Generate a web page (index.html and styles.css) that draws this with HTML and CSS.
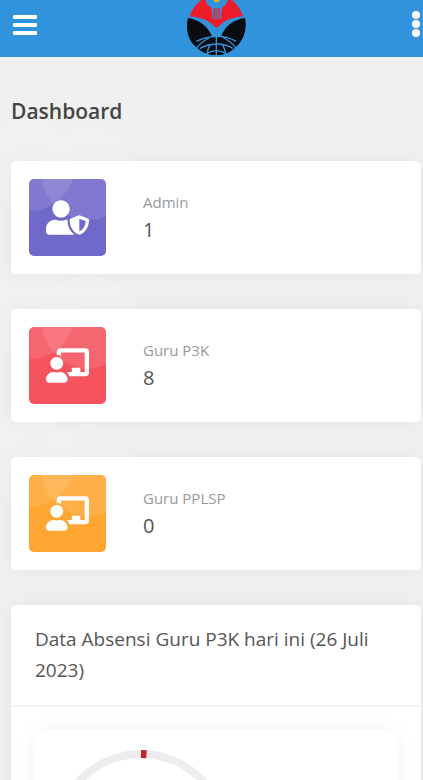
FILE: index.html
```html
<!DOCTYPE html>
<html lang="id">
<head>
<meta charset="utf-8">
<meta name="viewport" content="width=device-width, initial-scale=1">
<title>Dashboard</title>
<link rel="stylesheet" href="styles.css">
</head>
<body>
<header class="topbar">
  <button class="icon-button" type="button" aria-label="Menu">
    <svg width="24" height="22" viewBox="0 0 24 22" fill="currentColor"><rect x="1" y="1" width="24" height="4" rx="1"/><rect x="1" y="9" width="24" height="4" rx="1"/><rect x="1" y="17" width="24" height="4" rx="1"/></svg>
  </button>
  <a class="brand" href="#" aria-label="Beranda">
    <svg width="62" height="60" viewBox="3 0 186 180">
      <path fill="#ed1c2a" d="M14 49Q24 17 54-4H136Q164 17 174 49Q124 52 95 85Q66 52 14 49Z"/>
      <path fill="#3293dd" d="M62-4Q62 14 76 20Q82 24 82 56H86V24H91V58H94V24H97V58H100V24H104V56H108Q108 24 114 20Q128 14 128-4Z"/>
      <circle cx="95" cy="-2" r="9" fill="#f7b51c"/>
      <path fill="#090c10" d="M9 54Q60 62 82 110L95 108L108 110Q126 62 180 54C187 84 177 120 154 140C136 158 118 165 94 165S50 158 32 140C8 120 1 84 9 54Z"/>
      <path fill="none" stroke="#3293dd" stroke-width="4" d="M94 106V168M34 124Q60 110 94 109T153 124M44 146Q66 133 94 132T144 146M66 160Q78 152 94 152T122 160M82 108Q44 128 34 146M107 108Q144 128 154 146M76 134Q68 146 66 162M112 134Q120 146 122 162"/>
    </svg>
  </a>
  <button class="icon-button more" type="button" aria-label="Lainnya">
    <svg width="10" height="28" viewBox="0 0 10 28" fill="currentColor"><circle cx="5" cy="5" r="4"/><circle cx="5" cy="14" r="4"/><circle cx="5" cy="23" r="4"/></svg>
  </button>
</header>
<main class="content">
  <h1 class="title">Dashboard</h1>
  <div class="cards">
    <section class="card stat">
      <div class="tile purple">
        <svg class="glyph" viewBox="0 0 640 512"><path d="M622.3 271.1l-115.2-45c-4.1-1.6-12.6-3.7-22.2 0l-115.2 45c-10.7 4.2-17.700 14-17.700 24.900 0 111.600 68.700 188.800 132.900 213.900 9.600 3.700 18 1.600 22.200 0C558.400 489.900 640 420.500 640 296c0-10.900-7-20.700-17.700-24.900zM496 462.400V273.300l95.500 37.300c-5.600 87.100-60.900 135.400-95.500 151.800zM224 256c70.700 0 128-57.300 128-128S294.700 0 224 0 96 57.300 96 128s57.300 128 128 128zm96 40c0-2.500.8-4.800 1.100-7.200-2.500-.1-4.900-.8-7.500-.8h-16.700c-22.200 10.200-46.900 16-72.900 16s-50.600-5.800-72.900-16h-16.700C60.200 288 0 348.200 0 422.400V464c0 26.500 21.500 48 48 48h352c6.800 0 13.300-1.500 19.200-4-54-42.900-99.200-116.700-99.200-212z"/></svg>
      </div>
      <div class="info"><span class="label">Admin</span><span class="value">1</span></div>
    </section>
    <section class="card stat">
      <div class="tile red">
        <svg class="glyph" viewBox="0 0 640 512"><path d="M208 352c-2.390 0-4.780.35-7.060 1.090C187.980 357.300 174.350 360 160 360c-14.350 0-27.980-2.700-40.950-6.910-2.280-.74-4.660-1.090-7.050-1.090C49.940 352-.33 402.480 0 464.620.14 490.880 21.730 512 48 512h224c26.270 0 47.860-21.120 48-47.380.33-62.140-49.940-112.620-112-112.620zm-48-32c53.020 0 96-42.980 96-96s-42.980-96-96-96-96 42.980-96 96 42.980 96 96 96zM592 0H208c-26.470 0-48 22.250-48 49.590V96c23.420 0 45.100 6.780 64 17.800V64h352v288h-64v-64H384v64h-76.240c19.100 16.690 33.120 38.730 39.690 64H592c26.470 0 48-22.250 48-49.590V49.590C640 22.250 618.470 0 592 0z"/></svg>
      </div>
      <div class="info"><span class="label">Guru P3K</span><span class="value">8</span></div>
    </section>
    <section class="card stat">
      <div class="tile orange">
        <svg class="glyph" viewBox="0 0 640 512"><path d="M208 352c-2.390 0-4.780.35-7.060 1.090C187.980 357.300 174.350 360 160 360c-14.350 0-27.980-2.700-40.950-6.910-2.280-.74-4.660-1.090-7.050-1.090C49.940 352-.33 402.480 0 464.620.14 490.880 21.730 512 48 512h224c26.270 0 47.860-21.120 48-47.380.33-62.140-49.940-112.620-112-112.620zm-48-32c53.020 0 96-42.980 96-96s-42.980-96-96-96-96 42.980-96 96 42.980 96 96 96zM592 0H208c-26.470 0-48 22.250-48 49.590V96c23.420 0 45.100 6.780 64 17.800V64h352v288h-64v-64H384v64h-76.240c19.100 16.690 33.120 38.730 39.690 64H592c26.470 0 48-22.250 48-49.590V49.590C640 22.250 618.470 0 592 0z"/></svg>
      </div>
      <div class="info"><span class="label">Guru PPLSP</span><span class="value">0</span></div>
    </section>
    <section class="card panel">
      <h2 class="panel-title">Data Absensi Guru P3K hari ini (26 Juli 2023)</h2>
      <div class="panel-body">
        <div class="card chart">
          <svg width="176" height="176" viewBox="0 0 176 176" fill="none" stroke-width="8">
            <circle cx="88" cy="88" r="84" stroke="#ededed"/>
            <path d="M88 4A84 84 0 0 1 93.500 4.200" stroke="#c62127"/>
          </svg>
        </div>
      </div>
    </section>
  </div>
</main>
</body>
</html>
```

FILE: styles.css
```css
* { box-sizing: border-box; }
html { background: #f0f0f0; }
body {
  margin: 0;
  height: 100vh;
  overflow: hidden;
  background: #f0f0f0;
  font-family: "Open Sans", "Noto Sans", sans-serif;
  color: #555;
}
.topbar {
  display: grid;
  grid-template-columns: 1fr auto 1fr;
  align-items: start;
  height: 57px;
  padding: 0 2px 0 12px;
  background: #3293dd;
}
.icon-button {
  display: flex;
  justify-self: start;
  margin: 14px 0 0;
  padding: 0;
  border: 0;
  background: none;
  color: #fff;
}
.icon-button svg { overflow: visible; }
.more { justify-self: end; margin-top: 10px; }
.brand { display: block; height: 57px; overflow: hidden; }
.brand svg { display: block; }
.content { padding: 40px 2px 0 11px; }
.title {
  margin: 0 0 36px;
  font-size: 21px;
  line-height: 28px;
  font-weight: 600;
  color: #444;
}
.cards { display: flex; flex-direction: column; gap: 35px; }
.card {
  border-radius: 5px;
  background: #fff;
  box-shadow: 0 0 20px rgba(8, 21, 66, 0.05);
}
.stat { display: flex; align-items: center; gap: 37px; padding: 18px; }
.tile {
  position: relative;
  display: flex;
  flex: none;
  align-items: center;
  justify-content: center;
  width: 77px;
  height: 77px;
  border-radius: 5px;
}
.tile::before, .tile::after {
  content: "";
  position: absolute;
  width: 92px;
  height: 92px;
  border-radius: 50%;
  background: rgba(255, 255, 255, 0.11);
}
.tile::before { left: -46px; top: -60px; }
.tile::after { left: 13px; top: -51px; }
.purple { background: #7169c9; }
.red { background: #f5545f; }
.orange { background: #ffa632; }
.glyph { position: relative; width: 43px; height: 35px; fill: #fff; }
.info { display: flex; flex-direction: column; }
.label { font-size: 15px; line-height: 24px; color: #999; }
.value { font-size: 20px; line-height: 32px; }
.panel-title {
  margin: 0;
  padding: 19px 24px;
  border-bottom: 2px solid #f2f2f2;
  font-size: 19px;
  line-height: 31px;
  font-weight: 400;
}
.panel-body { padding: 23px 24px; }
.chart { padding: 20px 18px; }
.chart svg { display: block; }
```
